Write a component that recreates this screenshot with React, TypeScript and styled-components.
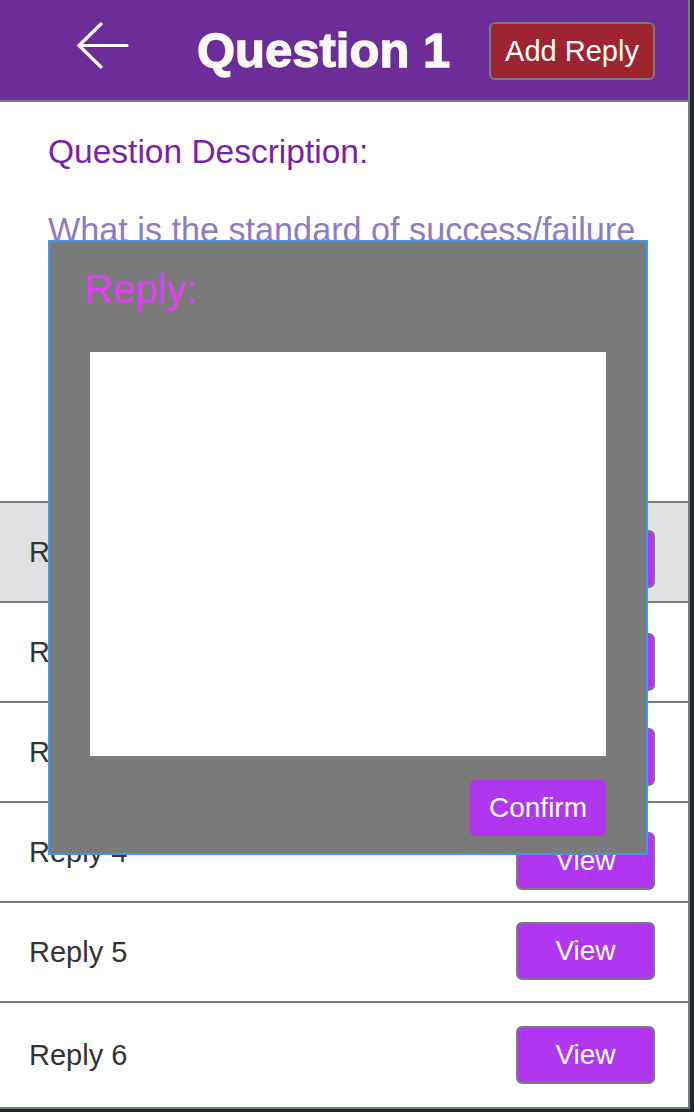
import styled, { createGlobalStyle } from "styled-components";

const GlobalStyle = createGlobalStyle`
  html, body {
    margin: 0;
    padding: 0;
    background: #23262d;
  }
  * {
    box-sizing: border-box;
  }
`;

const replies = [
  { label: "Reply 1", offset: 27, active: true },
  { label: "Reply 2", offset: 30 },
  { label: "Reply 3", offset: 25 },
  { label: "Reply 4", offset: 29 },
  { label: "Reply 5", offset: 19 },
  { label: "Reply 6", offset: 23 },
];

function BackArrow() {
  return (
    <svg width="52" height="48" viewBox="0 0 52 48" fill="none">
      <path
        d="M24 2 L2 23.5 L24 45 M2 23.5 L50 23.5"
        stroke="#ffffff"
        strokeWidth="3.2"
        strokeLinecap="round"
        strokeLinejoin="round"
      />
    </svg>
  );
}

function App() {
  return (
    <>
      <GlobalStyle />
      <Page>
        <Header>
          <BackButton>
            <BackArrow />
          </BackButton>
          <Title>Question 1</Title>
          <AddReplyButton>Add Reply</AddReplyButton>
        </Header>

        <Description>
          <DescLabel>Question Description:</DescLabel>
          <DescText>What is the standard of success/failure</DescText>
        </Description>

        <ReplyList>
          {replies.map((r, i) => (
            <ReplyRow
              key={r.label}
              $active={r.active}
              $last={i === replies.length - 1}
            >
              <ReplyName>{r.label}</ReplyName>
              <ViewButton $offset={r.offset}>View</ViewButton>
            </ReplyRow>
          ))}
        </ReplyList>

        <Modal>
          <ModalLabel>Reply:</ModalLabel>
          <ReplyInput />
          <ModalFooter>
            <ConfirmButton>Confirm</ConfirmButton>
          </ModalFooter>
        </Modal>
      </Page>
    </>
  );
}

const Page = styled.div`
  position: relative;
  width: 690px;
  background: #ffffff;
  border-right: 2px solid #7a7a7a;
  font-family: "Liberation Sans", Arial, Helvetica, sans-serif;
`;

const Header = styled.div`
  display: flex;
  align-items: center;
  height: 102px;
  padding: 0 33px 2px 77px;
  background: #6c2d98;
  border-bottom: 2px solid #7a7a7a;
`;

const BackButton = styled.div`
  display: flex;
  width: 52px;
  height: 48px;
  margin-top: -6px;
  cursor: pointer;
`;

const Title = styled.h1`
  margin: 2px 0 0 68px;
  font-size: 49px;
  line-height: 56px;
  font-weight: 700;
  color: #fbf8f8;
  -webkit-text-stroke: 1.3px #fbf8f8;
`;

const AddReplyButton = styled.button`
  margin-left: auto;
  width: 166px;
  height: 58px;
  margin-top: 4px;
  padding: 0;
  background: #9e2431;
  border: 2px solid #7b7b7b;
  border-radius: 6px;
  color: #ffffff;
  font-family: inherit;
  font-size: 29px;
  cursor: pointer;
`;

const Description = styled.div`
  height: 399px;
  overflow: hidden;
  padding: 30px 10px 0 48px;
`;

const DescLabel = styled.div`
  font-size: 33.5px;
  line-height: 40px;
  color: #7a1fa8;
`;

const DescText = styled.div`
  width: 600px;
  margin-top: 38px;
  font-size: 34.2px;
  line-height: 40px;
  color: #8e7cc3;
`;

const ReplyList = styled.div`
  display: flex;
  flex-direction: column;
`;

const ReplyRow = styled.div<{ $active?: boolean; $last?: boolean }>`
  display: flex;
  align-items: center;
  height: ${(p) => (p.$last ? "108px" : "100px")};
  padding: 0 33px 0 29px;
  background: ${(p) => (p.$active ? "#e0e0e0" : "#ffffff")};
  border-top: 2px solid #7a7a7a;
  border-bottom: ${(p) => (p.$last ? "2px solid #7a7a7a" : "none")};
`;

const ReplyName = styled.div`
  font-size: 29px;
  color: #333333;
`;

const ViewButton = styled.button<{ $offset: number }>`
  align-self: flex-start;
  margin: ${(p) => p.$offset}px 0 0 auto;
  width: 139px;
  height: 58px;
  padding: 0;
  background: #b036ef;
  border: 2px solid #7a7a7a;
  border-radius: 6px;
  color: #ffffff;
  font-family: inherit;
  font-size: 28px;
  cursor: pointer;
`;

const Modal = styled.div`
  position: absolute;
  left: 48px;
  top: 240px;
  width: 600px;
  height: 615px;
  display: flex;
  flex-direction: column;
  padding: 24px 40px 0 40px;
  background: #7a7a7a;
  border: 2px solid #3d97f0;
`;

const ModalLabel = styled.div`
  margin-left: -6px;
  font-size: 40px;
  line-height: 46px;
  color: #e23ff5;
`;

const ReplyInput = styled.textarea`
  width: 516px;
  height: 404px;
  margin-top: 40px;
  border: none;
  outline: none;
  resize: none;
  background: #ffffff;
`;

const ModalFooter = styled.div`
  display: flex;
  justify-content: flex-end;
  margin-top: 24px;
`;

const ConfirmButton = styled.button`
  width: 136px;
  height: 56px;
  padding: 0;
  background: #b036ef;
  border: none;
  border-radius: 5px;
  color: #ffffff;
  font-family: inherit;
  font-size: 28px;
  cursor: pointer;
`;

export default App;
